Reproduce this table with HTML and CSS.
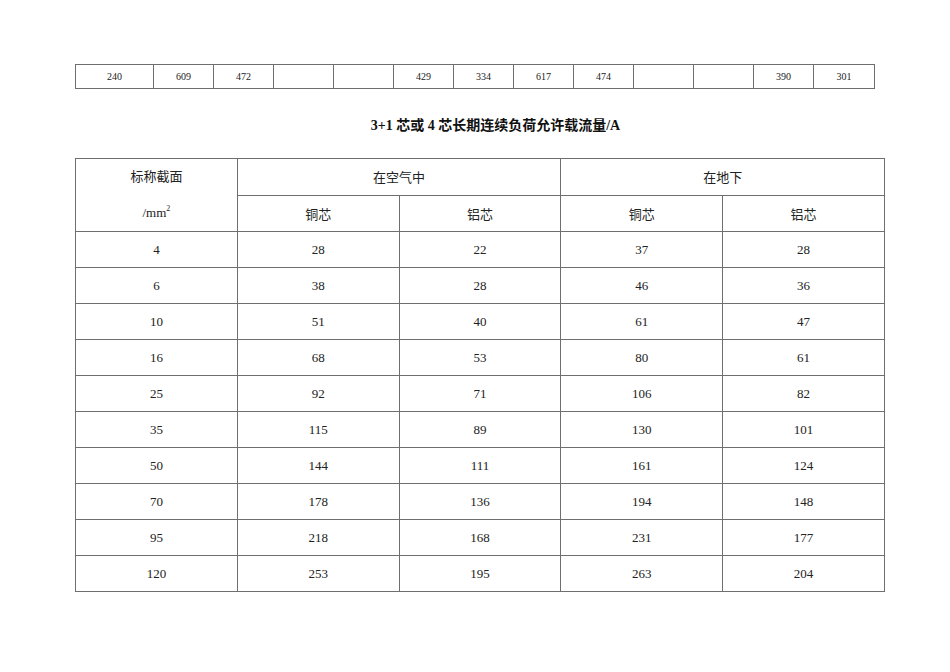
FILE: index.html
```html
<!DOCTYPE html>
<html lang="zh">
<head>
<meta charset="utf-8">
<link rel="stylesheet" href="styles.css">
</head>
<body>
<div class="page">
  <table class="top">
    <colgroup>
      <col class="c-first"><col class="c"><col class="c"><col class="c"><col class="c"><col class="c"><col class="c"><col class="c"><col class="c"><col class="c"><col class="c"><col class="c"><col class="c-last">
    </colgroup>
    <tr>
      <td>240</td><td>609</td><td>472</td><td></td><td></td><td>429</td><td>334</td><td>617</td><td>474</td><td></td><td></td><td>390</td><td>301</td>
    </tr>
  </table>
  <h2 class="title">3+1 芯或 4 芯长期连续负荷允许载流量/A</h2>
  <table class="main">
    <colgroup>
      <col class="m"><col class="m"><col class="m"><col class="m"><col class="m">
    </colgroup>
    <tr>
      <td rowspan="2" class="head2"><div class="l1">标称截面</div><div class="l2">/mm<sup>2</sup></div></td>
      <td colspan="2">在空气中</td>
      <td colspan="2">在地下</td>
    </tr>
    <tr><td>铜芯</td><td>铝芯</td><td>铜芯</td><td>铝芯</td></tr>
    <tr><td>4</td><td>28</td><td>22</td><td>37</td><td>28</td></tr>
    <tr><td>6</td><td>38</td><td>28</td><td>46</td><td>36</td></tr>
    <tr><td>10</td><td>51</td><td>40</td><td>61</td><td>47</td></tr>
    <tr><td>16</td><td>68</td><td>53</td><td>80</td><td>61</td></tr>
    <tr><td>25</td><td>92</td><td>71</td><td>106</td><td>82</td></tr>
    <tr><td>35</td><td>115</td><td>89</td><td>130</td><td>101</td></tr>
    <tr><td>50</td><td>144</td><td>111</td><td>161</td><td>124</td></tr>
    <tr><td>70</td><td>178</td><td>136</td><td>194</td><td>148</td></tr>
    <tr><td>95</td><td>218</td><td>168</td><td>231</td><td>177</td></tr>
    <tr><td>120</td><td>253</td><td>195</td><td>263</td><td>204</td></tr>
  </table>
</div>
</body>
</html>
```
FILE: styles.css
```css
html, body {
  margin: 0;
  padding: 0;
  background: #ffffff;
}
body {
  font-family: "Liberation Serif", "Noto Sans CJK SC", serif;
  color: #222;
}
.page {
  padding: 64px 0 0 75px;
}
table {
  border-collapse: collapse;
  table-layout: fixed;
}
td {
  border: 1px solid #6e6e6e;
  text-align: center;
  vertical-align: middle;
  padding: 0;
}
.top {
  width: 799px;
}
.top col.c {
  width: 60px;
}
.top col.c-first {
  width: 78px;
}
.top col.c-last {
  width: 61px;
}
.top td {
  height: 23px;
  font-size: 10px;
}
.title {
  margin: 27px 0 0 16px;
  width: 809px;
  text-align: center;
  font-size: 14px;
  font-weight: bold;
  line-height: 20px;
  height: 20px;
  color: #111;
}
.main {
  margin-top: 22px;
  width: 809px;
}
.main col.m {
  width: 161.8px;
}
.main td {
  height: 35px;
  font-size: 13px;
}
.main .head2 {
  line-height: 36px;
}
.main .l1, .main .l2 {
  height: 36px;
}
sup {
  font-size: 8px;
  vertical-align: 6px;
  line-height: 0;
}
```
